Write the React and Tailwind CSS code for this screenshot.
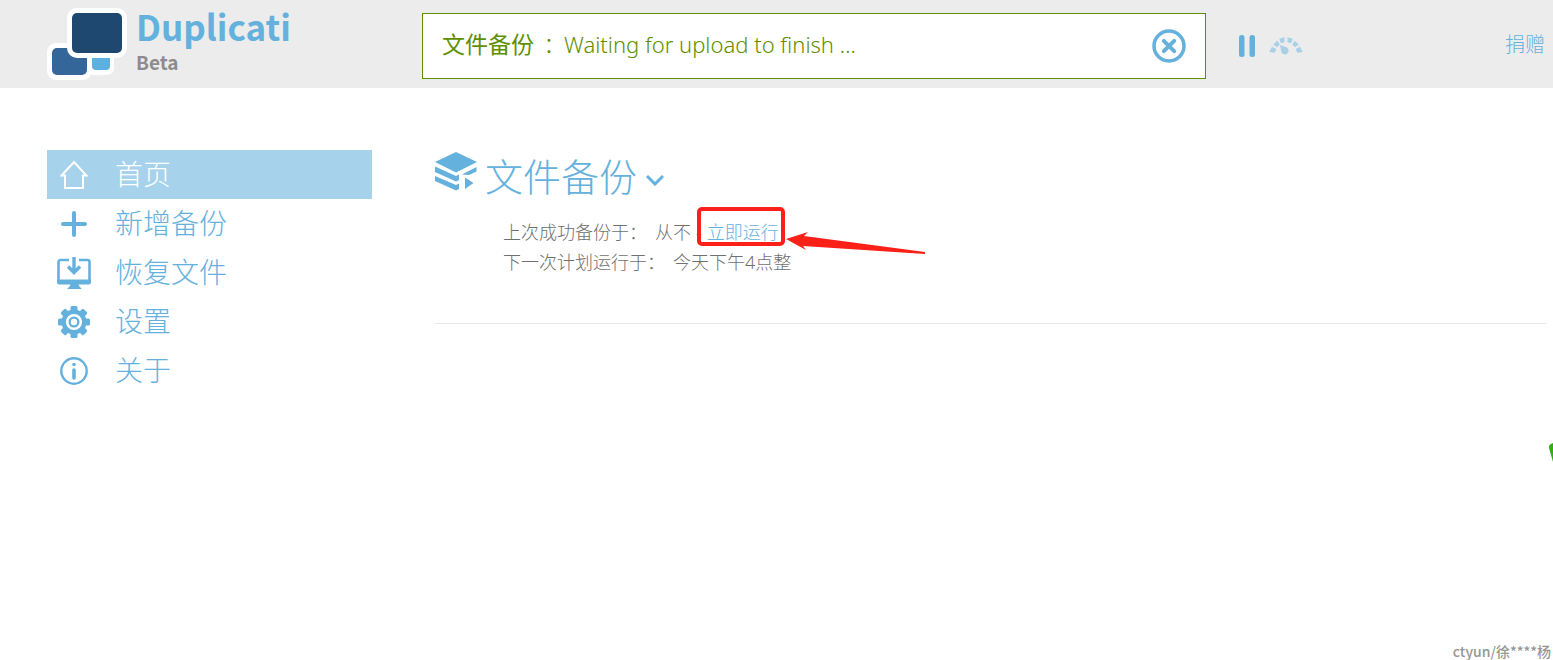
import React from "react";

function Logo() {
  return (
    <svg width="80" height="74" viewBox="0 0 80 74" aria-hidden="true">
      <rect x="40" y="40" width="27" height="27" rx="7" fill="#fff" />
      <rect x="45" y="40" width="18" height="22" rx="4" fill="#5eb0de" />
      <rect x="0" y="35" width="45" height="37" rx="9" fill="#fff" />
      <rect x="5" y="40" width="35" height="27" rx="5" fill="#34669a" />
      <rect x="20" y="0" width="60" height="50" rx="10" fill="#fff" />
      <rect x="25" y="5" width="50" height="40" rx="5" fill="#1f4871" />
    </svg>
  );
}

function HomeIcon() {
  return (
    <svg width="28" height="30" viewBox="0 0 28 30" fill="none" stroke="currentColor" strokeWidth="2" aria-hidden="true">
      <path d="M1.500 15.500 14 2l12.500 13.500H23V28H5V15.500z" />
    </svg>
  );
}

function PlusIcon() {
  return (
    <svg width="26" height="26" viewBox="0 0 26 26" fill="none" stroke="currentColor" strokeWidth="4" strokeLinecap="round" aria-hidden="true">
      <path d="M13 2v22M2 13h22" />
    </svg>
  );
}

function RestoreIcon() {
  return (
    <svg width="34" height="34" viewBox="0 0 34 34" aria-hidden="true">
      <path d="M12 4H3.500A2 2 0 0 0 1.500 6V24M22 4h8.500a2 2 0 0 1 2 2V24" fill="none" stroke="currentColor" strokeWidth="2.600" />
      <path d="M0 23.500h34v2.500a2.500 2.500 0 0 1-2.500 2.500H21.500l1 2 2.500 2.500h-15l2.500-2.500 1-2H2.500A2.500 2.500 0 0 1 0 26z" fill="currentColor" />
      <path d="M17 1v14M11 10.500l6 6 6-6" fill="none" stroke="currentColor" strokeWidth="3.400" />
    </svg>
  );
}

function GearIcon() {
  return (
    <svg width="32" height="32" viewBox="0 0 32 32" aria-hidden="true">
      <g fill="currentColor">
        <rect x="12.500" y="0" width="7" height="32" rx="1.500" />
        <rect x="12.500" y="0" width="7" height="32" rx="1.500" transform="rotate(45 16 16)" />
        <rect x="12.500" y="0" width="7" height="32" rx="1.500" transform="rotate(90 16 16)" />
        <rect x="12.500" y="0" width="7" height="32" rx="1.500" transform="rotate(135 16 16)" />
        <circle cx="16" cy="16" r="12.500" />
      </g>
      <circle cx="16" cy="16" r="6.800" fill="none" stroke="#fff" strokeWidth="2.600" />
      <circle cx="16" cy="16" r="3.200" fill="#fff" />
    </svg>
  );
}

function InfoIcon() {
  return (
    <svg width="28" height="28" viewBox="0 0 28 28" aria-hidden="true">
      <circle cx="14" cy="14" r="12.700" fill="none" stroke="currentColor" strokeWidth="2.400" />
      <circle cx="14" cy="7.500" r="1.800" fill="currentColor" />
      <path d="M14 13v8" stroke="currentColor" strokeWidth="3.600" strokeLinecap="round" />
    </svg>
  );
}

function StackIcon() {
  return (
    <svg width="42" height="40" viewBox="0 0 42 40" fill="currentColor" aria-hidden="true">
      <path d="M21 0 42 10 21 20.500 0 10z" />
      <path d="M0 14.500 21 24 24 22.500V28L21 29.500 0 20z" />
      <path d="M0 24 21 33 24 31.500V37L21 38.500 0 29z" />
      <path d="M27 22.500 41.500 15V19.500L34 23z" />
      <path d="M30 25.500 38.500 31 30 37z" />
    </svg>
  );
}

function CancelIcon() {
  return (
    <svg width="34" height="34" viewBox="0 0 34 34" fill="none" stroke="currentColor" aria-hidden="true">
      <circle cx="17" cy="17" r="15" strokeWidth="3.500" />
      <path d="m11.800 11.800 10.400 10.400M22.200 11.800 11.800 22.200" strokeWidth="4" strokeLinecap="round" />
    </svg>
  );
}

function PauseIcon() {
  return (
    <svg width="16" height="22" viewBox="0 0 16 22" fill="currentColor" aria-hidden="true">
      <rect x="0" y="0" width="5.500" height="22" rx="2.500" />
      <rect x="10.500" y="0" width="5.500" height="22" rx="2.500" />
    </svg>
  );
}

function GaugeIcon() {
  return (
    <svg width="34" height="20" viewBox="0 0 34 20" fill="currentColor" aria-hidden="true">
      <path d="M.3 16 3 10.800 7.200 13 5.800 16.800z" />
      <path d="M4.300 8.500 8.300 4.800 10.800 8.500 8 11.200z" />
      <path d="M10.300 2.800 15.500 1.200V6.200L12 7.200z" />
      <path d="M18.500 1.200 23.700 2.800 22 7.200 18.500 6.200z" />
      <path d="M25.700 4.800 29.700 8.500 26 11.200 23.200 8.500z" />
      <path d="M31 10.800 33.700 16 28.200 16.800 26.800 13z" />
      <path d="M11 9 18 11.500a3.800 3.800 0 1 1-5.500 5z" />
    </svg>
  );
}

const menu = [
  { label: "首页", icon: HomeIcon, active: true },
  { label: "新增备份", icon: PlusIcon },
  { label: "恢复文件", icon: RestoreIcon },
  { label: "设置", icon: GearIcon },
  { label: "关于", icon: InfoIcon },
];

function Header() {
  return (
    <header className="flex h-[88px] items-start bg-[#ececec]">
      <a href="#home" className="flex w-[422px] shrink-0 gap-[9px] pt-2 pl-[47px]">
        <Logo />
        <span className="flex flex-col font-['Noto_Sans_CJK_SC',sans-serif] font-bold">
          <span className="text-[35px] leading-[36px] text-[#65b1dd]">Duplicati</span>
          <span className="pt-2 text-[19px] leading-5 text-[#8c8c8c]">Beta</span>
        </span>
      </a>
      <section aria-label="进度" className="mt-[13px] flex h-[66px] w-[784px] items-center justify-between border border-[#5f9000] bg-white pr-[19px] pl-[19px] text-[22px] text-[#5f9000]">
        <p className="flex items-center pb-[3px] font-light">
          <span className="text-[23px] font-normal">文件备份</span>
          <span className="px-1 font-['Noto_Sans_CJK_TC',sans-serif]">：</span>
          <span>Waiting for upload to finish …</span>
        </p>
        <button type="button" aria-label="停止" className="text-[#65b1dd]"><CancelIcon /></button>
      </section>
      <div className="flex h-[92px] items-center gap-[14px] pl-[33px] text-[#65b1dd]">
        <button type="button" aria-label="暂停"><PauseIcon /></button>
        <button type="button" aria-label="限速" className="text-[#a9d0e6]"><GaugeIcon /></button>
      </div>
      <a href="#donate" className="ml-auto flex h-[90px] items-center pr-2 text-[20px] font-light text-[#65b1dd]">捐赠</a>
    </header>
  );
}

function Sidebar() {
  return (
    <nav className="w-[325px] shrink-0">
      <ul>
        {menu.map(({ label, icon: Icon, active }) => (
          <li key={label}>
            <a
              href="#menu"
              className={
                active
                  ? "flex h-[49px] items-center bg-[#a6d2ec] text-[28px] font-light text-white"
                  : "flex h-[49px] items-center text-[28px] font-light text-[#65b1dd]"
              }
            >
              <span className="flex w-[54px] justify-center"><Icon /></span>
              <span className="pb-px pl-[14px]">{label}</span>
            </a>
          </li>
        ))}
      </ul>
    </nav>
  );
}

function Backup() {
  return (
    <main className="mr-[7px] ml-[63px] flex-1">
      <article className="border-b border-[#e8e8e8] pb-[46px]">
        <h2 className="flex h-[52px] items-center text-[38px] font-light text-[#65b1dd]">
          <span className="-mt-2"><StackIcon /></span>
          <span className="pl-2">文件备份</span>
          <button type="button" aria-label="展开" className="mt-2 pl-[9px]">
            <svg width="18" height="12" viewBox="0 0 18 12" fill="none" stroke="currentColor" strokeWidth="3" aria-hidden="true">
              <path d="m1 2 8 8 8-8" />
            </svg>
          </button>
        </h2>
        <dl className="pt-[15px] pl-[68px] text-[18px] leading-[30px] font-light text-[#707070]">
          <div className="flex">
            <dt>上次成功备份于：</dt>
            <dd className="flex pl-2">
              <span>从不</span>
              <span className="px-[5px]">-</span>
              <span className="relative">
                <a href="#run" className="text-[#65b1dd]">立即运行</a>
                <svg className="pointer-events-none absolute -top-[11px] -left-[11px]" width="232" height="50" viewBox="0 0 232 50" aria-hidden="true">
                  <rect x="3" y="3" width="84" height="35" rx="3" fill="none" stroke="#fb2018" strokeWidth="4" />
                  <path d="M90 33 112 26 108 30 229 46 229 48 107 40 110 44z" fill="#fb2018" />
                </svg>
              </span>
            </dd>
          </div>
          <div className="flex">
            <dt>下一次计划运行于：</dt>
            <dd className="pl-2">今天下午4点整</dd>
          </div>
        </dl>
      </article>
    </main>
  );
}

export default function App() {
  return (
    <div className="relative flex min-h-screen flex-col overflow-hidden bg-white font-['Noto_Sans','Noto_Sans_CJK_SC',sans-serif]">
      <Header />
      <div className="flex flex-1 pt-[62px] pl-[47px]">
        <Sidebar />
        <Backup />
      </div>
      <footer className="pr-[2px] text-right font-['Noto_Sans_CJK_SC',sans-serif] text-[14px] leading-[18px] font-medium text-[#969696]">ctyun/徐****杨</footer>
      <svg className="absolute top-[443px] right-0" width="5" height="20" viewBox="0 0 5 20" aria-hidden="true">
        <path d="M5 0 2 1.500Q.8 2.500 1 5L5 19z" fill="#35ae16" />
      </svg>
    </div>
  );
}
